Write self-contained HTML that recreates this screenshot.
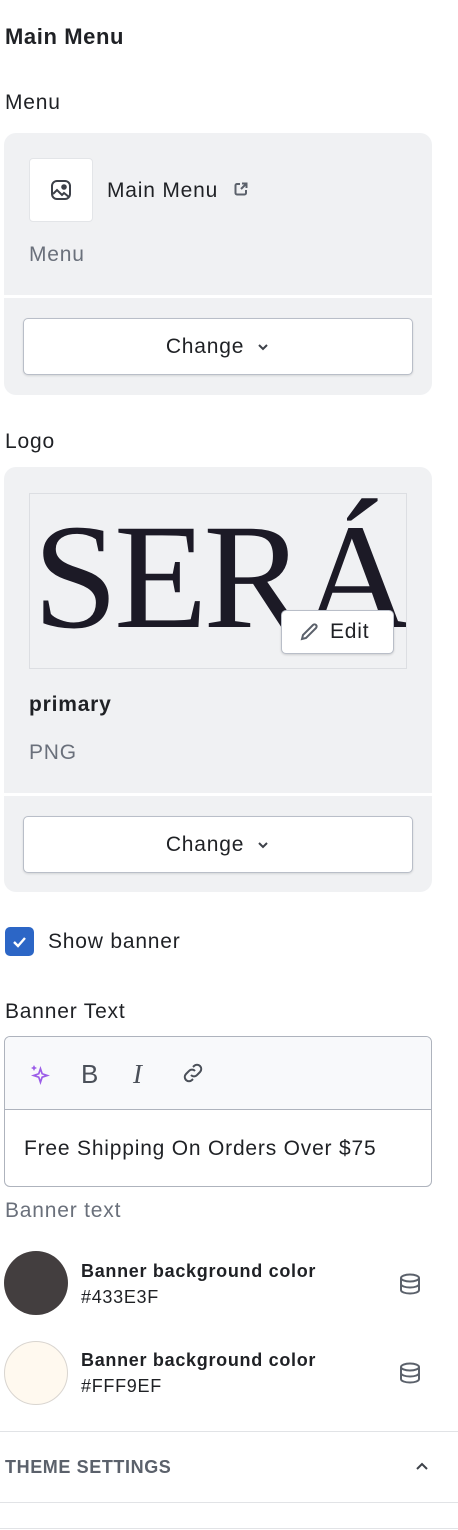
<!DOCTYPE html>
<html><head><meta charset="utf-8"><style>
*{box-sizing:border-box;margin:0;padding:0}
body{width:458px;height:1530px;background:#fff;font-family:"Liberation Sans",Arial,sans-serif;color:#1f2125;position:relative;overflow:hidden}
.a{position:absolute}
.t{font-size:21px;letter-spacing:.8px}
.card{position:absolute;left:4px;width:428px;background:#f0f1f3;border-radius:12px;overflow:hidden}
.btn{position:absolute;left:19px;width:390px;height:57px;background:#fff;border:1px solid #b9bec8;border-radius:5px;box-shadow:0 1px 2px rgba(0,0,0,.12);font-size:21px;letter-spacing:.8px;display:flex;align-items:center;justify-content:center;gap:12px}
.div{position:absolute;left:0;width:100%;height:3px;background:#fff}
.b{font-size:18px;letter-spacing:.7px}
</style></head><body>
<div class="a" style="left:5px;top:24px;font-size:22px;letter-spacing:.6px;font-weight:bold">Main Menu</div>
<div class="a t" style="left:5px;top:91px">Menu</div>
<div class="card" style="top:133px;height:262px">
 <div class="a" style="left:25px;top:25px;width:64px;height:64px;background:#fff;border:1px solid #e3e5e8;border-radius:4px">
  <svg class="a" style="left:20px;top:20px" width="22" height="22" viewBox="0 0 22 22" fill="none" stroke="#3d4149" stroke-width="2"><rect x="2" y="2" width="18" height="18" rx="5"/><path d="M3 15l4-4 5 5 2-2 5 4"/><circle cx="14" cy="8" r="1.8" fill="#3d4149"/></svg>
 </div>
 <div class="a t" style="left:103px;top:46px">Main Menu</div>
 <svg class="a" style="left:229px;top:48px" width="16" height="16" viewBox="0 0 16 16" fill="none" stroke="#5b616b" stroke-width="2"><path d="M7 3H4a1.5 1.5 0 0 0-1.5 1.5v7.5A1.5 1.5 0 0 0 4 13.5h7.5A1.5 1.5 0 0 0 13 12V9M9 2.5h4.5V7M13.5 2.5L8 8"/></svg>
 <div class="a t" style="left:25px;top:110px;color:#6a707b">Menu</div>
 <div class="div" style="top:162px"></div>
 <div class="btn" style="top:185px">Change <svg width="14" height="10" viewBox="0 0 14 10"><path d="M3 3l4 4 4-4" stroke="#3d4149" stroke-width="2" fill="none"/></svg></div>
</div>
<div class="a t" style="left:5px;top:430px">Logo</div>
<div class="card" style="top:467px;height:425px">
 <div class="a" style="left:25px;top:26px;width:378px;height:176px;border:1px solid #dcdee2;overflow:hidden">
  <div class="a" style="left:3px;top:8px;font-family:'Liberation Serif',serif;font-size:150px;line-height:150px;color:#1c1a26;letter-spacing:-4px;transform:scaleX(1.02);transform-origin:left">SERÁ</div>
 </div>
 <div class="a" style="left:277px;top:143px;width:113px;height:44px;background:#fff;border:1px solid #b9bec8;border-radius:5px;box-shadow:0 1px 2px rgba(0,0,0,.15);font-size:21px;letter-spacing:.8px;display:flex;align-items:center;padding-left:16px;gap:10px">
  <svg width="22" height="22" viewBox="0 0 22 22" fill="none" stroke="#5b616b" stroke-width="2"><path d="M4 18l1-4L15 4a2 2 0 0 1 3 3L8 17z"/></svg>Edit</div>
 <div class="a t" style="left:25px;top:226px;font-weight:bold">primary</div>
 <div class="a t" style="left:25px;top:274px;color:#6a707b">PNG</div>
 <div class="div" style="top:326px"></div>
 <div class="btn" style="top:349px">Change <svg width="14" height="10" viewBox="0 0 14 10"><path d="M3 3l4 4 4-4" stroke="#3d4149" stroke-width="2" fill="none"/></svg></div>
</div>
<div class="a" style="left:5px;top:927px;width:29px;height:29px;background:#2c66c6;border-radius:5px">
 <svg class="a" style="left:6px;top:6px" width="17" height="17" viewBox="0 0 17 17"><path d="M3 9l4 4 7-8" stroke="#fff" stroke-width="2.4" fill="none"/></svg></div>
<div class="a t" style="left:48px;top:930px">Show banner</div>
<div class="a t" style="left:5px;top:1000px">Banner Text</div>
<div class="a" style="left:4px;top:1036px;width:428px;height:151px;border:1px solid #aeb3bd;border-radius:6px;overflow:hidden">
 <div class="a" style="left:0;top:0;width:100%;height:73px;background:#f8f9fb;border-bottom:1px solid #aeb3bd"></div>
 <svg class="a" style="left:24px;top:26px" width="24" height="24" viewBox="0 0 24 24"><path d="M14 6l2 6 6 2-6 2-2 6-2-6-6-2 6-2z" fill="none" stroke="#9c5de8" stroke-width="2" transform="translate(-3,-2) scale(0.85) translate(3,3)"/><path d="M5 2l1 2 2 1-2 1-1 2-1-2-2-1 2-1z" fill="#9c5de8"/></svg>
 <div class="a" style="left:76px;top:22px;font-size:26px;color:#4b5059">B</div>
 <div class="a" style="left:128px;top:22px;font-size:27px;color:#4b5059;font-family:'Liberation Serif',serif;font-style:italic">I</div>
 <svg class="a" style="left:176px;top:24px" width="24" height="24" viewBox="0 0 24 24" fill="none" stroke="#4b5059" stroke-width="2"><path d="M10 14a4 4 0 0 0 6 0l3-3a4 4 0 0 0-6-6l-1 1M14 10a4 4 0 0 0-6 0l-3 3a4 4 0 0 0 6 6l1-1"/></svg>
 <div class="a t" style="left:19px;top:100px">Free Shipping On Orders Over $75</div>
</div>
<div class="a t" style="left:5px;top:1199px;color:#6a707b">Banner text</div>
<div class="a" style="left:4px;top:1251px;width:64px;height:64px;border-radius:50%;background:#433e3f"></div>
<div class="a b" style="left:81px;top:1261px;font-weight:bold">Banner background color</div>
<div class="a b" style="left:81px;top:1287px">#433E3F</div>
<div class="a" style="left:4px;top:1341px;width:64px;height:64px;border-radius:50%;background:#fff9ef;border:1.5px solid #d9d5d0"></div>
<div class="a b" style="left:81px;top:1350px;font-weight:bold">Banner background color</div>
<div class="a b" style="left:81px;top:1376px">#FFF9EF</div>
<svg class="a" style="left:398px;top:1272px" width="24" height="24" viewBox="0 0 24 24" fill="none" stroke="#5b616b" stroke-width="2"><ellipse cx="12" cy="6" rx="9" ry="3.5"/><path d="M3 6v12c0 2 4 3.5 9 3.5s9-1.5 9-3.5V6M3 12c0 2 4 3.5 9 3.5s9-1.5 9-3.5"/></svg>
<svg class="a" style="left:398px;top:1361px" width="24" height="24" viewBox="0 0 24 24" fill="none" stroke="#5b616b" stroke-width="2"><ellipse cx="12" cy="6" rx="9" ry="3.5"/><path d="M3 6v12c0 2 4 3.5 9 3.5s9-1.5 9-3.5V6M3 12c0 2 4 3.5 9 3.5s9-1.5 9-3.5"/></svg>
<div class="a" style="left:0;top:1431px;width:458px;height:1px;background:#e1e3e6"></div>
<div class="a" style="left:5px;top:1457px;font-size:18px;font-weight:bold;color:#5b616b;letter-spacing:.6px">THEME SETTINGS</div>
<svg class="a" style="left:414px;top:1459px" width="16" height="14" viewBox="0 0 16 14"><path d="M3 10l5-5 5 5" stroke="#3d4149" stroke-width="2" fill="none"/></svg>
<div class="a" style="left:0;top:1502px;width:458px;height:1px;background:#e1e3e6"></div>
<div class="a" style="left:0;top:1528px;width:458px;height:1px;background:#e1e3e6"></div>
</body></html>
